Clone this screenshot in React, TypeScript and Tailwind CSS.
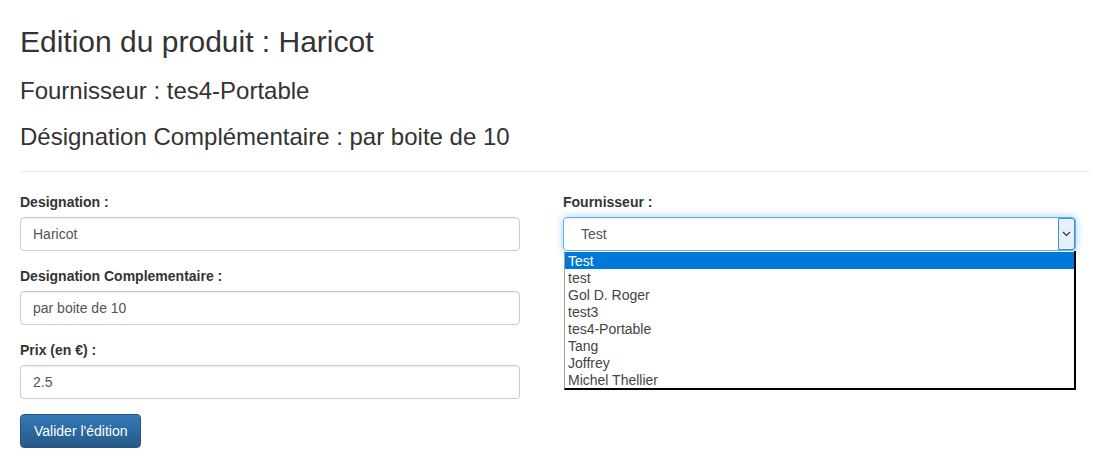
const fournisseurs = [
  'Test',
  'test',
  'Gol D. Roger',
  'test3',
  'tes4-Portable',
  'Tang',
  'Joffrey',
  'Michel Thellier',
]

function Field({ label, value }: { label: string; value: string }) {
  return (
    <div className="mb-[15px]">
      <label className="block font-bold leading-[20px] mb-[5px]">{label}</label>
      <div className="h-[34px] px-[12px] border border-[#ccc] rounded-[4px] shadow-[inset_0_1px_1px_rgba(0,0,0,0.075)] text-[#555] leading-[32px]">
        {value}
      </div>
    </div>
  )
}

export default function App() {
  return (
    <main className="w-[1110px] h-[476px] bg-white pl-[20px] pt-[25px] text-[#333] text-[14px] font-['Liberation_Sans',Arial,sans-serif] overflow-hidden">
      <h2 className="text-[30px] leading-[33px]">Edition du produit : Haricot</h2>
      <h3 className="mt-[20px] text-[24px] leading-[26.4px]">Fournisseur : tes4-Portable</h3>
      <h3 className="mt-[20px] text-[24px] leading-[26.4px]">
        Désignation Complémentaire : par boite de 10
      </h3>
      <hr className="mt-[20px] w-[1070px] border-0 border-t border-[#eee]" />

      <div className="mt-[20px] flex gap-[43px]">
        <form className="w-[500px]">
          <Field label="Designation :" value="Haricot" />
          <Field label="Designation Complementaire :" value="par boite de 10" />
          <Field label="Prix (en €) :" value="2.5" />
          <button
            type="button"
            className="h-[34px] px-[13px] rounded-[4px] border border-[#245580] bg-gradient-to-b from-[#337ab7] to-[#265a88] text-white leading-[32px]"
          >
            Valider l'édition
          </button>
        </form>

        <div className="w-[513px]">
          <label className="block font-bold leading-[20px] mb-[5px]">Fournisseur :</label>
          <div className="relative">
            <div className="h-[34px] flex border border-[#66afe9] rounded-[4px] shadow-[inset_0_1px_1px_rgba(0,0,0,0.075),0_0_8px_rgba(102,175,233,0.6)]">
              <span className="flex-1 pl-[17px] text-[#555] leading-[32px]">Test</span>
              <span className="w-[17px] h-[32px] bg-[#e5f1fb] border border-[#3c8fdb] rounded-r-[3px] flex items-center justify-center">
                <svg width="9" height="6" viewBox="0 0 9 6">
                  <path d="M1 1l3.5 3.5L8 1" fill="none" stroke="#333" strokeWidth="1.2" />
                </svg>
              </span>
            </div>
            <ul className="absolute left-[1px] top-[34px] w-[512px] pt-[1px] bg-white border-l border-l-[#a0a0a0] border-r-2 border-r-black border-b-2 border-b-black">
              {fournisseurs.map((f, i) => (
                <li
                  key={f}
                  className={
                    i === 0
                      ? 'h-[17px] leading-[19px] pl-[3px] bg-[#0078d7] text-white'
                      : 'h-[17px] leading-[19px] pl-[3px] text-[#444]'
                  }
                >
                  {f}
                </li>
              ))}
            </ul>
          </div>
        </div>
      </div>
    </main>
  )
}
